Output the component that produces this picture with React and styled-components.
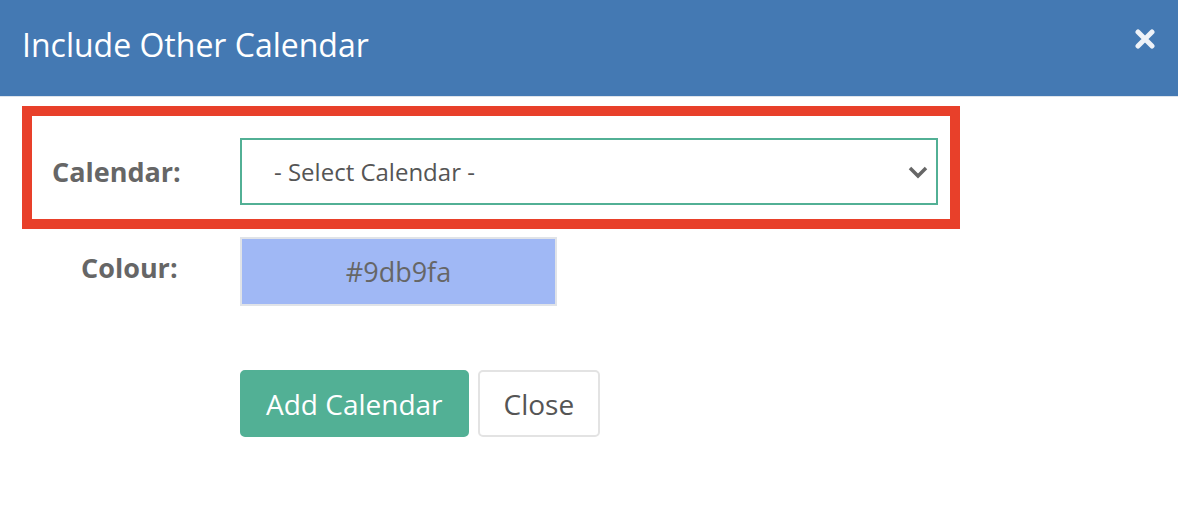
import styled, { createGlobalStyle } from "styled-components";

const GlobalStyle = createGlobalStyle`
  body {
    margin: 0;
    background: #ffffff;
    font-family: "Open Sans", "Noto Sans", sans-serif;
  }
`

const Header = styled.div`
  height: 96px;
  background-color: #4479b3;
  border-bottom: 1px solid #dde4ec;
  display: flex;
  align-items: center;
  justify-content: space-between;
  padding: 0 22px;
`
const Title = styled.h1`
  margin: 0;
  margin-top: -8px;
  font-size: 32px;
  font-weight: 400;
  color: #ffffff;
`
const CloseIcon = styled.button`
  border: none;
  background: none;
  padding: 0;
  margin-top: -18px;
  margin-right: 1px;
  cursor: pointer;
  display: flex;
`
const Body = styled.div`
  padding-top: 9px;
  display: flex;
  flex-direction: column;
`
const Highlight = styled.div`
  margin-left: 22px;
  width: 918px;
  border: 10px solid #e8402a;
  padding: 22px 0 14px;
`
const Row = styled.div`
  display: grid;
  grid-template-columns: ${(p) => p.$labelWidth}px auto;
  align-items: center;
`
const Label = styled.label`
  font-size: 27px;
  font-weight: 700;
  color: #666666;
  padding-left: ${(p) => p.$indent}px;
  margin-top: ${(p) => p.$offset || 0}px;
  align-self: ${(p) => (p.$top ? "start" : "center")};
`
const SelectBox = styled.div`
  box-sizing: border-box;
  width: 698px;
  height: 67px;
  border: 2px solid #52b095;
  display: flex;
  align-items: center;
  justify-content: space-between;
  padding: 0 8px 0 32px;
  font-size: 24px;
  color: #555555;
`
const Swatch = styled.div`
  box-sizing: border-box;
  width: 317px;
  height: 69px;
  border: 2px solid #e0e3e8;
  background-color: ${(p) => p.$color};
  display: flex;
  align-items: center;
  justify-content: center;
  font-size: 27px;
  color: #666666;
`
const ColourRow = styled(Row)`
  margin-top: 8px;
`
const Actions = styled.div`
  margin-top: 64px;
  padding-left: 240px;
  display: flex;
  gap: 9px;
`
const Button = styled.button`
  box-sizing: border-box;
  height: 67px;
  padding: 0 24px;
  border-radius: 5px;
  border: 2px solid ${(p) => (p.$primary ? "#52b095" : "#e3e3e3")};
  background-color: ${(p) => (p.$primary ? "#52b095" : "#ffffff")};
  color: ${(p) => (p.$primary ? "#ffffff" : "#555555")};
  font-family: "Open Sans", "Noto Sans", sans-serif;
  font-size: 28px;
  cursor: pointer;
`

export default function App() {
  const colour = "#9db9fa";
  return (
    <>
      <GlobalStyle />
      <Header>
        <Title>Include Other Calendar</Title>
        <CloseIcon aria-label="close">
          <svg width="20" height="20" viewBox="0 0 20 20">
            <path
              d="M3 3 L17 17 M17 3 L3 17"
              stroke="#eef2f8"
              strokeWidth="5"
              strokeLinecap="round"
            />
          </svg>
        </CloseIcon>
      </Header>
      <Body>
        <Highlight>
          <Row $labelWidth={208}>
            <Label $indent={20}>Calendar:</Label>
            <SelectBox>
              <span>- Select Calendar -</span>
              <svg width="20" height="14" viewBox="0 0 20 14">
                <polyline
                  points="2,3 10,11 18,3"
                  fill="none"
                  stroke="#666666"
                  strokeWidth="3.5"
                />
              </svg>
            </SelectBox>
          </Row>
        </Highlight>
        <ColourRow $labelWidth={240}>
          <Label $indent={81} $top $offset={12}>Colour:</Label>
          <Swatch $color="#a0b8f5">{colour}</Swatch>
        </ColourRow>
        <Actions>
          <Button $primary>Add Calendar</Button>
          <Button>Close</Button>
        </Actions>
      </Body>
    </>
  );
}
